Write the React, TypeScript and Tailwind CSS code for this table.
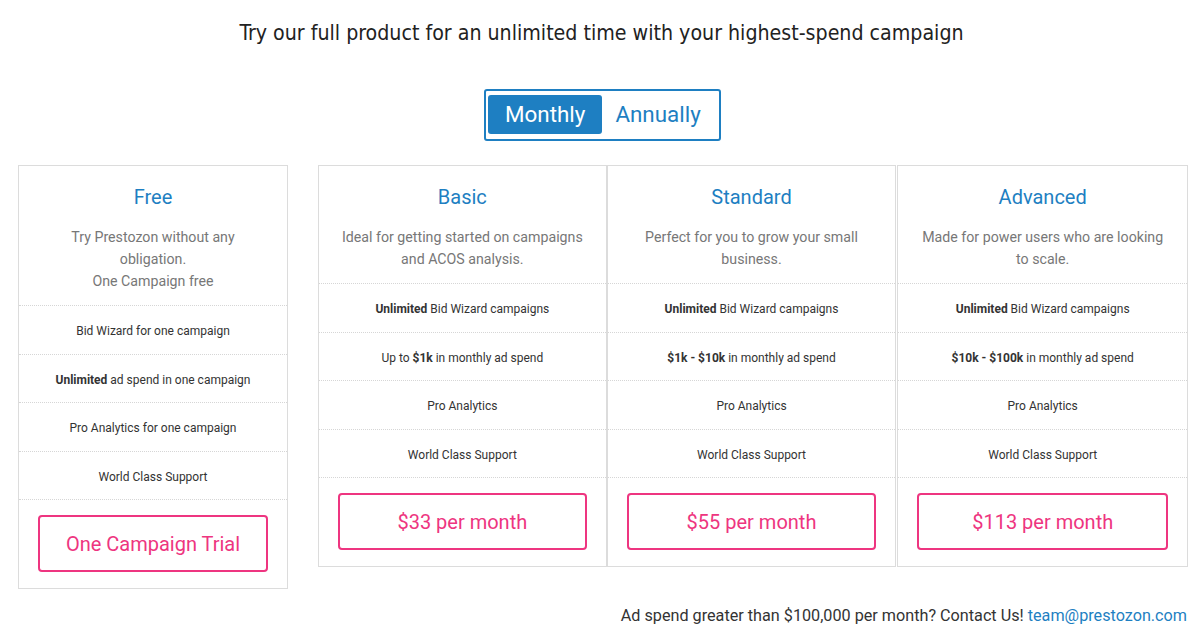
import { ReactNode } from "react";

type Plan = {
  name: string;
  desc: ReactNode;
  features: ReactNode[];
  cta: string;
};

const free: Plan = {
  name: "Free",
  desc: (
    <>
      Try Prestozon without any
      <br />
      obligation.
      <br />
      One Campaign free
    </>
  ),
  features: [
    "Bid Wizard for one campaign",
    <>
      <b className="font-bold">Unlimited</b> ad spend in one campaign
    </>,
    "Pro Analytics for one campaign",
    "World Class Support",
  ],
  cta: "One Campaign Trial",
};

const plans: Plan[] = [
  {
    name: "Basic",
    desc: (
      <>
        Ideal for getting started on campaigns
        <br />
        and ACOS analysis.
      </>
    ),
    features: [
      <>
        <b className="font-bold">Unlimited</b> Bid Wizard campaigns
      </>,
      <>
        Up to <b className="font-bold">$1k</b> in monthly ad spend
      </>,
      "Pro Analytics",
      "World Class Support",
    ],
    cta: "$33 per month",
  },
  {
    name: "Standard",
    desc: (
      <>
        Perfect for you to grow your small
        <br />
        business.
      </>
    ),
    features: [
      <>
        <b className="font-bold">Unlimited</b> Bid Wizard campaigns
      </>,
      <>
        <b className="font-bold">$1k - $10k</b> in monthly ad spend
      </>,
      "Pro Analytics",
      "World Class Support",
    ],
    cta: "$55 per month",
  },
  {
    name: "Advanced",
    desc: (
      <>
        Made for power users who are looking
        <br />
        to scale.
      </>
    ),
    features: [
      <>
        <b className="font-bold">Unlimited</b> Bid Wizard campaigns
      </>,
      <>
        <b className="font-bold">$10k - $100k</b> in monthly ad spend
      </>,
      "Pro Analytics",
      "World Class Support",
    ],
    cta: "$113 per month",
  },
];

const Card = ({ plan, className }: { plan: Plan; className: string }) => (
  <div className={`border border-[#dcdcdc] bg-white flex flex-col ${className}`}>
    <div className="pt-[19px] pb-[13px] px-4 text-center border-b border-dotted border-[#d6d6d6]">
      <h2 className="text-[20px] leading-6 text-[#1e7fc2]">{plan.name}</h2>
      <p className="mt-[17px] text-[14.2px] leading-[22px] text-[#777]">{plan.desc}</p>
    </div>
    {plan.features.map((f, i) => (
      <div
        key={i}
        className="h-[48.5px] pt-[3px] flex items-center justify-center text-[12px] text-[#333] border-b border-dotted border-[#d6d6d6]"
      >
        <span>{f}</span>
      </div>
    ))}
    <div className="px-[19px] pt-[15px] pb-4">
      <button className="w-full h-[57px] rounded border-2 border-[#ee3580] text-[#ee3580] text-[20px] bg-white">
        {plan.cta}
      </button>
    </div>
  </div>
);

export default function App() {
  return (
    <div className="w-[1203px] h-[641px] bg-white overflow-hidden font-['Roboto',sans-serif]">
      <h1 className="pt-[19px] text-center text-[21.2px] leading-[27px] font-medium text-[#222] font-['DejaVu_Sans_Condensed','Roboto',sans-serif]">
        Try our full product for an unlimited time with your highest-spend campaign
      </h1>
      <div className="mt-[43px] flex justify-center pl-[2px]">
        <div className="flex items-center w-[237px] h-[52px] border-2 border-[#1e7fc2] rounded-[3px] pl-[2px] pt-[4px] pb-[5px]">
          <button className="h-[39px] px-[17px] rounded-[3px] bg-[#1e7fc2] text-white text-[22.4px]">
            Monthly
          </button>
          <button className="h-[39px] pl-[13px] pr-[14px] text-[#1e7fc2] text-[22.4px]">
            Annually
          </button>
        </div>
      </div>
      <div className="mt-[24px] flex items-start pl-[18px] gap-[30px]">
        <Card plan={free} className="w-[270px]" />
        <div className="flex w-[870px]">
          {plans.map((p, i) => (
            <Card
              key={p.name}
              plan={p}
              className={i === 0 ? "w-[289px]" : i === 1 ? "w-[290px]" : "w-[291px] ml-px"}
            />
          ))}
        </div>
      </div>
      <p className="mt-[15px] pr-[16px] text-right text-[16.2px] text-[#333]">
        Ad spend greater than $100,000 per month? Contact Us!{" "}
        <span className="text-[#1e7fc2]">team@prestozon.com</span>
      </p>
    </div>
  );
}
